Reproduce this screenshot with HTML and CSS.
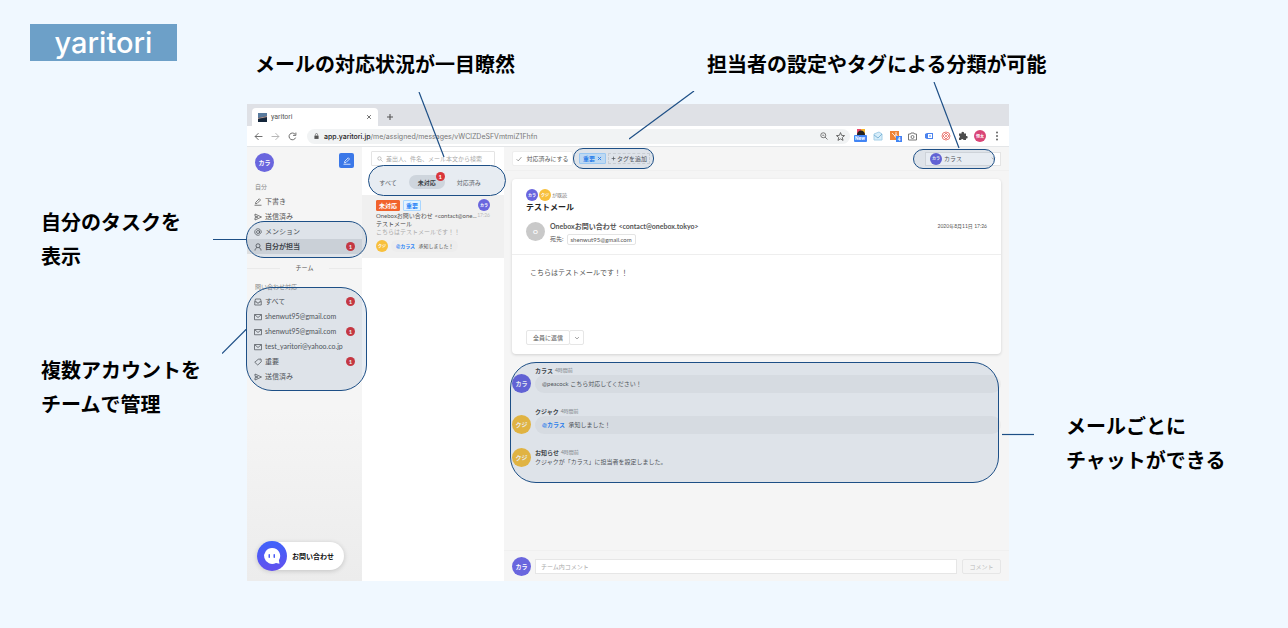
FILE: index.html
```html
<!DOCTYPE html>
<html lang="ja">
<head>
<meta charset="utf-8">
<title>yaritori</title>
<link rel="stylesheet" href="styles.css">
</head>
<body>
<svg class="defs" width="0" height="0" aria-hidden="true">
  <symbol id="i-mail" viewBox="0 0 16 16"><path d="M1 3h14v10.500H1zM1.500 3.500 8 9l6.500-5.500"/></symbol>
  <symbol id="i-send" viewBox="0 0 16 16"><path d="M2 2l13 6-13 6V9.500L8 8 2 6.500z"/></symbol>
  <symbol id="i-pen" viewBox="0 0 16 16"><path d="M3 11.500 3.500 8.500 10.500 1.500l2.500 2.500-7 7zM1 14.500h14"/></symbol>
  <symbol id="i-tag" viewBox="0 0 16 16"><path d="M1.500 8.500 8.500 2.500 14 2l.5 5.500-7 6.500zM11.500 4.800v.4"/></symbol>
  <symbol id="i-inbox" viewBox="0 0 16 16"><path d="M1.500 7.500 3 2h10l1.500 5.500V14h-13zM1.500 7.500H5l1 2.500h4l1-2.500h3.500"/></symbol>
  <symbol id="i-at" viewBox="0 0 16 16"><circle cx="8" cy="8" r="3"/><path d="M11 5v4.500c0 2 3.500 2 3.500-1.500A6.500 6.500 0 1 0 11.500 13.500"/></symbol>
  <symbol id="i-user" viewBox="0 0 16 16"><circle cx="8" cy="5.500" r="4"/><path d="M2 15c0-3 2-5 4-5.800M10 9.200c2.500 1 4 3 4 5.800"/></symbol>
  <symbol id="i-search" viewBox="0 0 16 16"><circle cx="6.500" cy="6.500" r="4.500"/><path d="M10 10l5 5"/></symbol>
  <symbol id="i-x" viewBox="0 0 16 16"><path d="M3 3l10 10M13 3 3 13"/></symbol>
  <symbol id="i-plus" viewBox="0 0 16 16"><path d="M8 2v12M2 8h12"/></symbol>
  <symbol id="i-check" viewBox="0 0 16 16"><path d="M1.500 8.500 6 13 14.500 3"/></symbol>
  <symbol id="i-down" viewBox="0 0 16 16"><path d="M3 5.500l5 5 5-5"/></symbol>
</svg>

<header class="top">
  <h1 class="brand">yaritori</h1>
  <div class="top-notes">
    <p class="note">メールの対応状況が一目瞭然</p>
    <p class="note">担当者の設定やタグによる分類が可能</p>
  </div>
</header>

<main class="stage">
  <div class="notes notes-left">
    <p class="note">自分のタスクを<br>表示</p>
    <p class="note">複数アカウントを<br>チームで管理</p>
  </div>

  <div class="window">
    <div class="tabstrip">
      <div class="browser-tab">
        <svg class="favicon" viewBox="0 0 9 9"><path fill="#25324a" d="M0 0h9v9H0z"/><path fill="#587a9e" d="M0 0h9v3L0 5z"/><path fill="#b59a92" d="M0 5l9-2v1L0 6z"/><path fill="#14263b" d="M0 6l9-1v4H0z"/></svg>
        <span>yaritori</span>
        <button class="plain push" aria-label="閉じる"><svg class="ic s6 bold"><use href="#i-x"/></svg></button>
      </div>
      <button class="plain" aria-label="新しいタブ"><svg class="ic s8 bold"><use href="#i-plus"/></svg></button>
    </div>

    <div class="navbar">
      <button class="plain" aria-label="戻る"><svg class="ic s9" viewBox="0 0 16 16"><path d="M15 8H2M8 2 2 8l6 6"/></svg></button>
      <button class="plain faint" aria-label="進む"><svg class="ic s9" viewBox="0 0 16 16"><path d="M1 8h13M8 2l6 6-6 6"/></svg></button>
      <button class="plain" aria-label="再読み込み"><svg class="ic s9" viewBox="0 0 16 16"><path d="M13.500 10A6 6 0 1 1 12.500 4M14 1v5H9"/></svg></button>
      <div class="urlbar">
        <svg class="lock" viewBox="0 0 12 14"><path fill="#555" d="M1 6h10v8H1z"/><path fill="none" stroke="#555" stroke-width="1.500" d="M3.500 6V3.500a2.500 2.500 0 0 1 5 0V6"/></svg>
        <span class="url"><b>app.yaritori.jp</b>/me/assigned/messages/vWClZDeSFVmtmiZ1Fhfn</span>
        <span class="url-tools">
          <svg class="ic s8" viewBox="0 0 16 16"><circle cx="6.500" cy="6.500" r="5"/><path d="M10 10l5 5M4.500 6.500h4"/></svg>
          <svg class="ic s9" viewBox="0 0 16 16"><path d="M8 1l2 5 5.200.4-4 3.400 1.300 5.100L8 12.200l-4.500 2.700 1.300-5.100-4-3.400L6 6z"/></svg>
        </span>
      </div>
      <div class="extensions">
        <svg class="ext" viewBox="0 0 14 14"><path fill="#e9486b" d="M3 0h4v6H3z"/><path fill="#f5b62e" d="M7 0h4v6H7z"/><path fill="#222" d="M3 6c0-6 8-6 8 0z"/><rect y="6" width="13" height="7" rx="1" fill="#4285f4"/><text class="ext-text" x="1" y="11">New</text></svg>
        <svg class="ext" viewBox="0 0 14 14"><path fill="#d7edf9" stroke="#a5cfe8" d="M3 5l5-2 3 2v6H3z"/><path fill="none" stroke="#7fb6d8" d="M3 6l4 3 4-4"/></svg>
        <svg class="ext" viewBox="0 0 14 14"><path fill="#ee8434" d="M2 2h9v9H2z"/><path stroke="#fff" stroke-width=".8" fill="none" d="M4 4l3 3M8 3v3"/><circle cx="8" cy="7" r="1.200" fill="none" stroke="#fff" stroke-width=".8"/><rect x="8" y="7" width="6" height="6" fill="#4285f4"/><text class="ext-text" x="9.500" y="12">4</text></svg>
        <svg class="ext" viewBox="0 0 14 14"><path fill="none" stroke="#777" d="M3.500 5h2l.5-1h3l.5 1h2v6h-8z"/><circle cx="7.500" cy="8" r="1.500" fill="none" stroke="#777"/></svg>
        <svg class="ext" viewBox="0 0 14 14"><path fill="#4b83ee" d="M3 5l2-1h6v6H5L3 9z"/><path fill="#fff" d="M6 5h4v4H6z"/><path stroke="#4b83ee" d="M7 7h2"/></svg>
        <svg class="ext" viewBox="0 0 14 14"><g fill="none" stroke="#ea6f69" stroke-width=".9"><circle cx="7" cy="7" r="4"/><path d="M7 4 10 7l-3 3-3-3zM7 6v2M6 7h2"/></g></svg>
        <svg class="ext" viewBox="0 0 14 14"><path fill="#4d4d4d" d="M3 4.500h2.500a1.300 1.300 0 1 1 2.500 0h2V7a1.300 1.300 0 1 1 0 2.500V11H7.500a1.300 1.300 0 0 0-2.500 0H3V9a1.300 1.300 0 0 0 0-2.500z"/></svg>
        <span class="avatar rose">恒太</span>
        <svg class="ext" viewBox="0 0 14 14"><g fill="#666"><circle cx="7" cy="3.500" r="1"/><circle cx="7" cy="7" r="1"/><circle cx="7" cy="10.500" r="1"/></g></svg>
      </div>
    </div>

    <div class="app">
      <nav class="sidebar">
        <div class="side-head">
          <span class="avatar big">カラ</span>
          <button class="compose" aria-label="作成"><svg class="ic s8"><use href="#i-pen"/></svg></button>
        </div>
        <p class="side-label">自分</p>
        <div class="side-group">
          <a class="side-row" href="#"><svg class="ic s8"><use href="#i-pen"/></svg>下書き</a>
          <a class="side-row" href="#"><svg class="ic s8"><use href="#i-send"/></svg>送信済み</a>
          <a class="side-row" href="#"><svg class="ic s8"><use href="#i-at"/></svg>メンション</a>
          <a class="side-row active" href="#"><svg class="ic s8"><use href="#i-user"/></svg>自分が担当<span class="badge">1</span></a>
          <div class="mark mark-self"><svg class="wire wire-self" viewBox="0 0 33 3"><path d="M0 1.500h33"/></svg></div>
        </div>
        <p class="divider">チーム</p>
        <p class="side-label">問い合わせ対応</p>
        <div class="side-group team">
          <a class="side-row" href="#"><svg class="ic s8"><use href="#i-inbox"/></svg>すべて<span class="badge">1</span></a>
          <a class="side-row" href="#"><svg class="ic s8"><use href="#i-mail"/></svg>shenwut95@gmail.com</a>
          <a class="side-row" href="#"><svg class="ic s8"><use href="#i-mail"/></svg>shenwut95@gmail.com<span class="badge">1</span></a>
          <a class="side-row" href="#"><svg class="ic s8"><use href="#i-mail"/></svg>test_yaritori@yahoo.co.jp</a>
          <a class="side-row" href="#"><svg class="ic s8"><use href="#i-tag"/></svg>重要<span class="badge">1</span></a>
          <a class="side-row" href="#"><svg class="ic s8"><use href="#i-send"/></svg>送信済み</a>
          <div class="mark mark-team"><svg class="wire wire-team" viewBox="0 0 25 25"><path d="M0 24.500 24.500 0"/></svg></div>
        </div>
        <button class="contact">
          <svg class="contact-icon" viewBox="0 0 30 30"><defs><linearGradient id="cg" x2="0" y2="1"><stop stop-color="#3f63fb"/><stop offset="1" stop-color="#6350ee"/></linearGradient></defs><circle cx="15" cy="15" r="15" fill="url(#cg)"/><path fill="#fff" d="M15 7a8 8 0 1 0 4 15l3.500.8-.6-3.500A8 8 0 0 0 15 7z"/><rect x="11.500" y="13" width="1.500" height="4" rx=".7" fill="#4c5cf6"/><rect x="16.500" y="13" width="1.500" height="4" rx=".7" fill="#4c5cf6"/></svg>
          <span>お問い合わせ</span>
        </button>
      </nav>

      <section class="list">
        <label class="search"><svg class="ic s6"><use href="#i-search"/></svg><input type="text" placeholder="差出人、件名、メール本文から検索" aria-label="検索"></label>
        <div class="tabs">
          <button class="tab">すべて</button>
          <button class="tab on">未対応<span class="badge tab-badge">1</span></button>
          <button class="tab">対応済み</button>
          <div class="mark mark-tabs"><svg class="wire wire-tabs" viewBox="0 0 27 66"><path d="M1 0 26 65"/></svg></div>
        </div>
        <article class="item">
          <div class="item-row"><span class="tag orange">未対応</span><span class="tag">重要</span><span class="avatar small push">カラ</span></div>
          <div class="item-row from"><span>Oneboxお問い合わせ &lt;contact@one...</span><time>17:26</time></div>
          <p class="subject">テストメール</p>
          <p class="preview">こちらはテストメールです！！</p>
          <div class="item-row last"><span class="avatar small gold">クジ</span><span class="reply"><b>@カラス</b> 承知しました！</span></div>
        </article>
      </section>

      <section class="content">
        <div class="toolbar">
          <button class="btn done"><svg class="ic s6"><use href="#i-check"/></svg>対応済みにする</button>
          <div class="tag-area">
            <button class="tag tag-x">重要<svg class="ic s5 heavy"><use href="#i-x"/></svg></button>
            <button class="add-tag"><svg class="ic s5 bold"><use href="#i-plus"/></svg>タグを追加</button>
            <div class="mark mark-tag"><svg class="wire wire-tag" viewBox="0 0 66 49"><path d="M65 0 0 48"/></svg></div>
          </div>
          <div class="assignee">
            <span class="avatar small">カラ</span>
            <select aria-label="担当者"><option>カラス</option></select>
            <svg class="ic s5"><use href="#i-down"/></svg>
            <div class="mark mark-assignee"><svg class="wire wire-assignee" viewBox="0 0 27 67"><path d="M1 0 26 66"/></svg></div>
          </div>
        </div>

        <article class="card">
          <div class="readers"><span class="avatar small">カラ</span><span class="avatar small gold">クジ</span><span>が既読</span></div>
          <h2 class="title">テストメール</h2>
          <div class="sender">
            <span class="avatar big gray">O</span>
            <div class="sender-lines">
              <div class="sender-line"><b>Oneboxお問い合わせ &lt;contact@onebox.tokyo&gt;</b></div>
              <div class="sender-line to">宛先: <span class="chip">shenwut95@gmail.com</span></div>
            </div>
            <time>2020年8月11日 17:26</time>
          </div>
          <p class="body">こちらはテストメールです！！</p>
          <div class="reply-buttons"><button class="btn">全員に返信</button><button class="btn more" aria-label="その他"><svg class="ic s6"><use href="#i-down"/></svg></button></div>
        </article>

        <div class="chat">
          <div class="msg"><span class="avatar big">カラ</span><div class="msg-main"><p class="who"><b>カラス</b> 4時間前</p><p class="bubble">@peacock こちら対応してください！</p></div></div>
          <div class="msg"><span class="avatar big gold">クジ</span><div class="msg-main"><p class="who"><b>クジャク</b> 4時間前</p><p class="bubble"><b>@カラス</b> 承知しました！</p></div></div>
          <div class="msg notice"><span class="avatar big gold">クジ</span><div class="msg-main"><p class="who"><b>お知らせ</b> 4時間前</p><p class="info">クジャクが「カラス」に担当者を設定しました。</p></div></div>
          <div class="mark mark-chat"><svg class="wire wire-chat" viewBox="0 0 32 3"><path d="M0 1.500h32"/></svg></div>
        </div>

        <form class="comment">
          <span class="avatar big">カラ</span>
          <input type="text" placeholder="チーム内コメント" aria-label="チーム内コメント">
          <button class="btn" type="button" disabled>コメント</button>
        </form>
      </section>
    </div>
  </div>

  <div class="notes notes-right">
    <p class="note">メールごとに<br>チャットができる</p>
  </div>
</main>
</body>
</html>
```
FILE: styles.css
```css
* { box-sizing: border-box; margin: 0; padding: 0; }

body {
  background: #f0f8ff;
  color: #555;
  font-family: Lato, "Noto Sans CJK JP", sans-serif;
  font-size: 6px;
  line-height: 9px;
}

button, input, select { font: inherit; color: inherit; border: 0; background: none; }
a { color: inherit; text-decoration: none; }
.defs { position: absolute; }

/* slide notes */
.top, .stage {
  display: grid;
  grid-template-columns: 247px minmax(0, 1fr) 279px;
}
.top { padding: 24px 0 23px; }
.brand {
  justify-self: start;
  align-self: start;
  margin-left: 30px;
  width: 147px;
  background: #6da0c8;
  color: #fff;
  font: 500 29px/37px Inter, "Noto Sans CJK JP", sans-serif;
  text-align: center;
}
.top-notes {
  grid-column: 2 / 4;
  display: flex;
  gap: 192px;
  padding: 23px 0 0 8px;
  white-space: nowrap;
}
.note {
  color: #000;
  font: 700 20px/34px "Noto Sans CJK JP", sans-serif;
}
.notes { display: flex; flex-direction: column; gap: 80px; }
.notes-left { padding: 101px 0 0 41px; }
.notes-right { padding: 305px 0 0 57px; }
.stage { padding-bottom: 47px; }

/* highlights and connectors */
.mark {
  position: absolute;
  z-index: 3;
  border: 1px solid #1d4f86;
  background: rgba(20, 70, 125, .1);
  pointer-events: none;
}
.wire { position: absolute; fill: none; stroke: #1d4f86; stroke-width: 1.2; }
.mark-self { left: -1px; right: -5px; bottom: -4px; height: 37px; border-radius: 18px; }
.mark-team { left: -1px; right: -5px; top: -7px; bottom: -7px; border-radius: 26px; }
.mark-tabs { left: 6px; right: -2px; top: -10px; bottom: -7px; border-radius: 16px; }
.mark-tag { left: -6px; right: -4px; top: -5px; bottom: -5px; border-radius: 10px; }
.mark-assignee { left: -13px; right: 5px; top: -4px; bottom: -4px; border-radius: 10px; }
.mark-chat { left: -2px; right: 2px; top: -4px; bottom: -16px; border-radius: 26px; }
.wire-self { width: 33px; height: 3px; left: -34px; top: 16px; }
.wire-team { width: 25px; height: 25px; left: -25px; top: 41px; }
.wire-tabs { width: 27px; height: 66px; left: 49px; bottom: 37px; }
.wire-tag { width: 66px; height: 49px; left: 55px; bottom: 28px; }
.wire-assignee { width: 27px; height: 67px; left: 19px; bottom: 19px; }
.wire-chat { width: 32px; height: 3px; right: -36px; top: 70px; }

/* shared parts */
.ic { flex: none; fill: none; stroke: currentColor; stroke-width: 1.5; }
.ic.bold { stroke-width: 2.2; }
.ic.heavy { stroke-width: 3; }
.s5 { width: 5px; height: 5px; }
.s6 { width: 6px; height: 6px; }
.s8 { width: 8px; height: 8px; }
.s9 { width: 9px; height: 9px; }
.plain { display: flex; }
.push { margin-left: auto; }
.plain.faint { color: #aaa; }
.avatar {
  flex: none;
  display: flex;
  align-items: center;
  justify-content: center;
  width: 12px;
  height: 12px;
  border-radius: 50%;
  background: #6a66de;
  color: #fff;
  font-size: 4px;
  font-weight: 700;
}
.avatar.big { width: 19px; height: 19px; font-size: 6px; }
.avatar.gold { background: #f8c03c; }
.avatar.gray { background: #c9c9c9; }
.avatar.rose { background: #d94577; }
.badge {
  display: flex;
  align-items: center;
  justify-content: center;
  width: 9px;
  height: 9px;
  margin-left: auto;
  border-radius: 50%;
  background: #d9363b;
  color: #fff;
  font-size: 6px;
  font-weight: 700;
}
.btn {
  display: flex;
  align-items: center;
  justify-content: center;
  height: 15px;
  border: 1px solid #e6e6e6;
  border-radius: 2px;
  background: #fff;
}
.tag {
  display: flex;
  align-items: center;
  justify-content: center;
  height: 11px;
  padding: 0 2px;
  border: 1px solid #a9d6ff;
  border-radius: 1px;
  background: #e3f3ff;
  color: #2f86f6;
  font-weight: 700;
}
.tag.orange { border-color: #f1622c; background: #f1622c; color: #fff; }

/* browser chrome */
.window { background: #fff; }
.tabstrip {
  display: flex;
  align-items: center;
  gap: 8px;
  height: 22px;
  padding: 4px 5px 0;
  background: #dfe1e6;
}
.browser-tab {
  display: flex;
  align-items: center;
  gap: 4px;
  width: 126px;
  height: 18px;
  padding: 0 6px;
  border-radius: 4px 4px 0 0;
  background: #fff;
  font-family: Roboto, sans-serif;
  font-size: 7px;
}
.favicon { width: 9px; height: 9px; }
.navbar {
  display: flex;
  align-items: center;
  gap: 8px;
  height: 21px;
  padding: 0 5px 0 7px;
  border-bottom: 1px solid #e4e6e8;
}
.urlbar {
  flex: 1;
  min-width: 0;
  display: flex;
  align-items: center;
  gap: 5px;
  height: 15px;
  margin-left: 2px;
  padding: 0 5px 0 7px;
  border-radius: 8px;
  background: #f1f3f4;
}
.lock { width: 5px; height: 6px; }
.url { font-family: Inter, sans-serif; font-size: 7px; color: #777; white-space: nowrap; }
.url b { font-weight: 500; color: #222; }
.url-tools { display: flex; gap: 8px; margin-left: auto; }
.extensions { display: flex; align-items: center; gap: 3px; margin-left: -4px; }
.ext { width: 14px; height: 14px; }
.ext-text { fill: #fff; font: 700 5px Roboto, sans-serif; }
.extensions .avatar { margin: 0 1px; }

/* app */
.app {
  display: grid;
  grid-template-columns: 115px 142px minmax(0, 1fr);
  min-height: calc(100vh - 194px);
}
.sidebar {
  display: flex;
  flex-direction: column;
  padding-top: 6px;
  background: linear-gradient(#f5f5f5 60%, #ececec);
}
.side-head { display: flex; justify-content: space-between; padding: 0 8px 7px; }
.compose {
  display: flex;
  align-items: center;
  justify-content: center;
  width: 15px;
  height: 15px;
  border-radius: 2px;
  background: #3b78e8;
  color: #fff;
}
.side-label { padding: 3px 8px; line-height: 9px; color: #888; }
.side-group { position: relative; }
.side-row {
  display: flex;
  align-items: center;
  gap: 3px;
  height: 15px;
  padding: 0 7px;
  font-size: 7px;
  color: #555;
}
.side-row.active { background: #dfe0e1; color: #444; font-weight: 700; }
.divider {
  display: flex;
  align-items: center;
  gap: 16px;
  margin: 8px 0 5px;
  line-height: 12px;
}
.divider::before, .divider::after { content: ""; flex: 1; border-top: 1px solid #eaeaea; }
.contact {
  align-self: flex-start;
  display: flex;
  align-items: center;
  gap: 5px;
  height: 28px;
  margin: auto 0 11px 10px;
  padding-right: 10px;
  border-radius: 14px;
  background: #fff;
  box-shadow: 0 1px 5px rgba(0, 0, 0, .18);
  color: #111;
  font-size: 7px;
  font-weight: 700;
}
.contact-icon { width: 30px; height: 30px; }

/* mail list */
.search {
  display: flex;
  align-items: center;
  gap: 3px;
  height: 15px;
  margin: 4px 9px 0;
  padding: 0 2px 0 5px;
  border: 1px solid #e4e4e4;
  border-radius: 1px;
  color: #999;
}
.search input { flex: 1; min-width: 0; outline: 0; }
::placeholder { color: #aaa; }
.tabs {
  position: relative;
  display: flex;
  justify-content: center;
  gap: 12px;
  margin-top: 9px;
  padding-right: 6px;
}
.tab { position: relative; height: 14px; color: #666; }
.tab.on { padding: 0 9px; border-radius: 7px; background: #e4e6e8; color: #444; font-weight: 700; }
.tab-badge { position: absolute; z-index: 4; top: -3px; right: 0; }
.item { margin-top: 6px; padding: 4px 14px 6px; background: #f0f0f0; }
.item-row { display: flex; align-items: center; gap: 3px; }
.from { justify-content: space-between; gap: 0; white-space: nowrap; }
.from time { color: #bbb; font-size: 5px; }
.subject { line-height: 8px; color: #444; }
.preview { line-height: 8px; color: #aaa; }
.last { margin-top: 4px; }
.reply { height: 12px; padding: 0 5px; border-radius: 6px; background: #ededed; font-size: 5px; line-height: 12px; }
.reply b, .bubble b { margin-right: 2px; color: #2f86f6; }

/* message pane */
.content { display: flex; flex-direction: column; background: #f5f5f5; }
.toolbar {
  display: flex;
  align-items: center;
  height: 24px;
  padding: 0 8px;
  border-bottom: 1px solid #f0f0f0;
}
.done { gap: 4px; width: 61px; border-color: #eee; }
.tag-area { position: relative; display: flex; gap: 2px; margin-left: 6px; }
.tag-x { gap: 2px; padding: 0 3px; background: #d2eaff; }
.add-tag { display: flex; align-items: center; gap: 1px; padding: 0 2px; border: 1px dashed #ddd; white-space: nowrap; }
.assignee {
  position: relative;
  display: flex;
  align-items: center;
  gap: 2px;
  width: 76px;
  height: 14px;
  margin-left: auto;
  padding: 0 4px;
  border: 1px solid #e4e4e4;
  background: #fff;
}
.assignee select { flex: 1; appearance: none; }
.card {
  margin: 8px 8px 0;
  padding-bottom: 9px;
  border-radius: 4px;
  background: #fff;
  box-shadow: 0 1px 3px rgba(0, 0, 0, .15);
}
.readers { display: flex; align-items: center; gap: 1px; padding: 10px 14px 0; color: #777; font-size: 5px; }
.title { padding: 0 14px; color: #222; font-size: 8px; line-height: 12px; }
.sender {
  display: flex;
  gap: 5px;
  padding: 7px 14px 9px;
  border-bottom: 1px solid #eee;
}
.sender .avatar { margin-top: 2px; }
.sender-lines { flex: 1; }
.sender-line { font-size: 7px; line-height: 13px; }
.sender-line.to { display: flex; align-items: center; gap: 3px; font-size: 6px; line-height: 12px; }
.chip { padding: 0 3px; border: 1px solid #e4e4e4; border-radius: 2px; line-height: 9px; }
.sender time { font-size: 5px; line-height: 13px; }
.body { padding: 11px 18px 12px; font-size: 7px; line-height: 12px; }
.reply-buttons { display: flex; padding: 40px 14px 0; }
.reply-buttons .btn { padding: 0 6px; }
.reply-buttons .more { width: 15px; margin-left: -1px; padding: 0; }
.chat { position: relative; display: flex; flex-direction: column; gap: 14px; margin: 12px 8px 0; }
.msg { display: flex; gap: 4px; }
.msg .avatar { margin-top: 8px; }
.msg.notice .avatar { margin-top: 0; }
.msg-main { flex: 1; min-width: 0; }
.who { display: flex; align-items: center; gap: 2px; height: 9px; color: #888; font-size: 5px; }
.who b { color: #444; font-size: 6px; }
.bubble { padding: 0 7px; border-radius: 9px; background: #ededed; line-height: 18px; }
.comment {
  display: flex;
  align-items: center;
  gap: 4px;
  margin-top: auto;
  padding: 6px 8px 5px;
  border-top: 1px solid #f0f0f0;
}
.comment input { flex: 1; min-width: 0; height: 15px; padding: 0 5px; border: 1px solid #e6e6e6; background: #fff; }
.comment .btn { width: 39px; margin-left: 1px; background: #f5f5f5; color: #bbb; }
```
